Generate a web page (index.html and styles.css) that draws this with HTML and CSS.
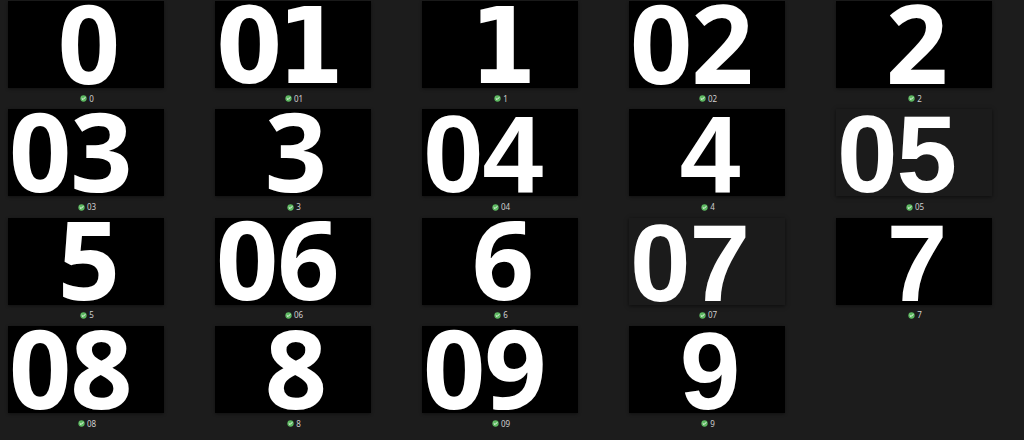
FILE: index.html
```html
<!DOCTYPE html>
<html>
<head>
<meta charset="utf-8">
<link rel="stylesheet" href="styles.css">
</head>
<body>
<div class="grid">
  <div class="cell"><div class="tile single hum"><span>0</span></div><div class="label"><svg class="ok" viewBox="0 0 8 8"><circle cx="4" cy="4" r="3.6"/><path d="M2.3 4.1 L3.5 5.2 L5.7 2.9"/></svg><span>0</span></div></div>
  <div class="cell"><div class="tile double dv"><span>01</span></div><div class="label"><svg class="ok" viewBox="0 0 8 8"><circle cx="4" cy="4" r="3.6"/><path d="M2.3 4.1 L3.5 5.2 L5.7 2.9"/></svg><span>01</span></div></div>
  <div class="cell"><div class="tile single dv"><span>1</span></div><div class="label"><svg class="ok" viewBox="0 0 8 8"><circle cx="4" cy="4" r="3.6"/><path d="M2.3 4.1 L3.5 5.2 L5.7 2.9"/></svg><span>1</span></div></div>
  <div class="cell"><div class="tile double hum"><span>02</span></div><div class="label"><svg class="ok" viewBox="0 0 8 8"><circle cx="4" cy="4" r="3.6"/><path d="M2.3 4.1 L3.5 5.2 L5.7 2.9"/></svg><span>02</span></div></div>
  <div class="cell"><div class="tile single hum"><span>2</span></div><div class="label"><svg class="ok" viewBox="0 0 8 8"><circle cx="4" cy="4" r="3.6"/><path d="M2.3 4.1 L3.5 5.2 L5.7 2.9"/></svg><span>2</span></div></div>

  <div class="cell"><div class="tile double hum"><span>03</span></div><div class="label"><svg class="ok" viewBox="0 0 8 8"><circle cx="4" cy="4" r="3.6"/><path d="M2.3 4.1 L3.5 5.2 L5.7 2.9"/></svg><span>03</span></div></div>
  <div class="cell"><div class="tile single hum"><span>3</span></div><div class="label"><svg class="ok" viewBox="0 0 8 8"><circle cx="4" cy="4" r="3.6"/><path d="M2.3 4.1 L3.5 5.2 L5.7 2.9"/></svg><span>3</span></div></div>
  <div class="cell"><div class="tile double ar"><span>04</span></div><div class="label"><svg class="ok" viewBox="0 0 8 8"><circle cx="4" cy="4" r="3.6"/><path d="M2.3 4.1 L3.5 5.2 L5.7 2.9"/></svg><span>04</span></div></div>
  <div class="cell"><div class="tile single ar"><span>4</span></div><div class="label"><svg class="ok" viewBox="0 0 8 8"><circle cx="4" cy="4" r="3.6"/><path d="M2.3 4.1 L3.5 5.2 L5.7 2.9"/></svg><span>4</span></div></div>
  <div class="cell"><div class="tile double ar clear"><span>05</span></div><div class="label"><svg class="ok" viewBox="0 0 8 8"><circle cx="4" cy="4" r="3.6"/><path d="M2.3 4.1 L3.5 5.2 L5.7 2.9"/></svg><span>05</span></div></div>

  <div class="cell"><div class="tile single hum"><span>5</span></div><div class="label"><svg class="ok" viewBox="0 0 8 8"><circle cx="4" cy="4" r="3.6"/><path d="M2.3 4.1 L3.5 5.2 L5.7 2.9"/></svg><span>5</span></div></div>
  <div class="cell"><div class="tile double hum"><span>06</span></div><div class="label"><svg class="ok" viewBox="0 0 8 8"><circle cx="4" cy="4" r="3.6"/><path d="M2.3 4.1 L3.5 5.2 L5.7 2.9"/></svg><span>06</span></div></div>
  <div class="cell"><div class="tile single hum"><span>6</span></div><div class="label"><svg class="ok" viewBox="0 0 8 8"><circle cx="4" cy="4" r="3.6"/><path d="M2.3 4.1 L3.5 5.2 L5.7 2.9"/></svg><span>6</span></div></div>
  <div class="cell"><div class="tile double ar clear"><span>07</span></div><div class="label"><svg class="ok" viewBox="0 0 8 8"><circle cx="4" cy="4" r="3.6"/><path d="M2.3 4.1 L3.5 5.2 L5.7 2.9"/></svg><span>07</span></div></div>
  <div class="cell"><div class="tile single ar"><span>7</span></div><div class="label"><svg class="ok" viewBox="0 0 8 8"><circle cx="4" cy="4" r="3.6"/><path d="M2.3 4.1 L3.5 5.2 L5.7 2.9"/></svg><span>7</span></div></div>

  <div class="cell"><div class="tile double hum"><span>08</span></div><div class="label"><svg class="ok" viewBox="0 0 8 8"><circle cx="4" cy="4" r="3.6"/><path d="M2.3 4.1 L3.5 5.2 L5.7 2.9"/></svg><span>08</span></div></div>
  <div class="cell"><div class="tile single hum"><span>8</span></div><div class="label"><svg class="ok" viewBox="0 0 8 8"><circle cx="4" cy="4" r="3.6"/><path d="M2.3 4.1 L3.5 5.2 L5.7 2.9"/></svg><span>8</span></div></div>
  <div class="cell"><div class="tile double hum"><span>09</span></div><div class="label"><svg class="ok" viewBox="0 0 8 8"><circle cx="4" cy="4" r="3.6"/><path d="M2.3 4.1 L3.5 5.2 L5.7 2.9"/></svg><span>09</span></div></div>
  <div class="cell"><div class="tile single ar"><span>9</span></div><div class="label"><svg class="ok" viewBox="0 0 8 8"><circle cx="4" cy="4" r="3.6"/><path d="M2.3 4.1 L3.5 5.2 L5.7 2.9"/></svg><span>9</span></div></div>
</div>
</body>
</html>
```

FILE: styles.css
```css
html, body {
  margin: 0;
  padding: 0;
  background: #1c1c1c;
}
body {
  padding: 1px 0 0 8px;
  overflow: hidden;
}
.grid {
  display: grid;
  grid-template-columns: repeat(5, 156px);
  column-gap: 51px;
  grid-auto-rows: 108.4px;
}
.cell {
  display: flex;
  flex-direction: column;
}
.tile {
  height: 87px;
  background: #000;
  box-shadow: 0 1px 3px rgba(0, 0, 0, 0.45);
  display: flex;
  align-items: center;
  color: #fff;
  font-weight: 700;
  font-size: 109px;
  line-height: 80px;
}
.tile span {
  display: block;
  height: 80px;
}
.tile.clear {
  background: #1b1b1b;
  box-shadow: 0 1px 4px rgba(0, 0, 0, 0.6);
}
.tile.single {
  justify-content: center;
  padding-left: 6px;
}
.tile.double {
  justify-content: flex-start;
  padding-left: 1px;
  letter-spacing: -1px;
}
.tile.hum {
  font-family: "Noto Sans", "Open Sans", sans-serif;
}
.tile.hum span {
  margin-top: -6px;
}
.tile.ar {
  font-family: "Liberation Sans", Arial, sans-serif;
}
.tile.ar span {
  margin-top: 3px;
}
.tile.dv {
  font-family: "DejaVu Sans Condensed", "DejaVu Sans", sans-serif;
  font-stretch: condensed;
  font-size: 106px;
}
.tile.dv.double {
  letter-spacing: -5px;
}
.tile.dv span {
  margin-top: 4px;
}
.label {
  height: 21.4px;
  display: flex;
  align-items: center;
  justify-content: center;
  gap: 2px;
  font-family: "Noto Sans", "Open Sans", sans-serif;
  font-size: 8px;
  line-height: 10px;
  color: #cfcfcf;
  padding-left: 2px;
}
.ok {
  width: 7px;
  height: 7px;
  flex: none;
}
.ok circle {
  fill: #5cb860;
}
.ok path {
  fill: none;
  stroke: #ffffff;
  stroke-width: 1.1;
  stroke-linecap: round;
  stroke-linejoin: round;
}
```
